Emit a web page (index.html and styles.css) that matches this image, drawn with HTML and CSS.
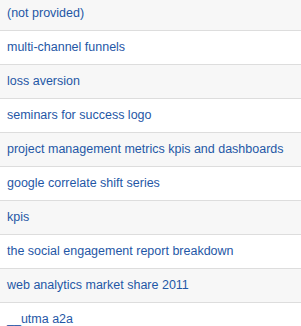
FILE: index.html
```html
<!DOCTYPE html>
<html>
<head>
<meta charset="utf-8">
<link rel="stylesheet" href="styles.css">
</head>
<body>
<ul class="list">
  <li class="row alt"><a class="link">(not provided)</a></li>
  <li class="row"><a class="link">multi-channel funnels</a></li>
  <li class="row alt"><a class="link">loss aversion</a></li>
  <li class="row"><a class="link">seminars for success logo</a></li>
  <li class="row alt"><a class="link">project management metrics kpis and dashboards</a></li>
  <li class="row"><a class="link">google correlate shift series</a></li>
  <li class="row alt"><a class="link">kpis</a></li>
  <li class="row"><a class="link">the social engagement report breakdown</a></li>
  <li class="row alt"><a class="link">web analytics market share 2011</a></li>
  <li class="row"><a class="link">__utma a2a</a></li>
</ul>
</body>
</html>
```
FILE: styles.css
```css
html, body {
  margin: 0;
  padding: 0;
  background: #ffffff;
}
.list {
  list-style: none;
  margin: -3px 0 0 0;
  padding: 0;
  font-family: "Liberation Sans", Arial, sans-serif;
  font-size: 12.5px;
}
.row {
  height: 31px;
  display: flex;
  align-items: center;
  padding: 0 7px 2px 7px;
  border-bottom: 1px solid #dddddd;
  background: #ffffff;
}
.row.alt {
  background: #f7f7f7;
}
.link {
  color: #1f57a6;
  white-space: nowrap;
  line-height: 16px;
}
```
